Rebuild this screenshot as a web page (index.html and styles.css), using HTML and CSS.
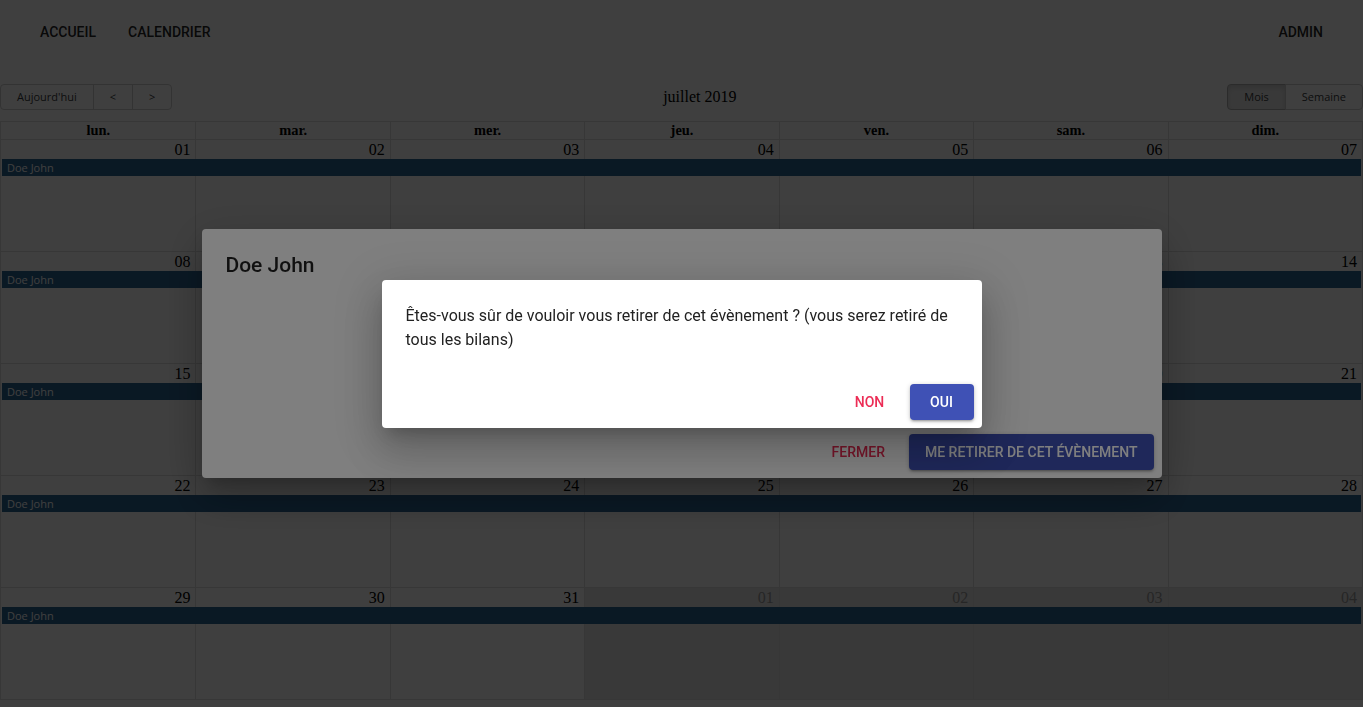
FILE: index.html
```html
<!DOCTYPE html>
<html lang="fr">
<head>
<meta charset="utf-8">
<title>Calendrier</title>
<link rel="stylesheet" href="styles.css">
</head>
<body>
<header class="appbar">
  <nav class="appbar-toolbar">
    <div class="nav-left">
      <button class="nav-btn">Accueil</button>
      <button class="nav-btn">Calendrier</button>
    </div>
    <button class="nav-btn">Admin</button>
  </nav>
</header>

<main class="calendar">
  <div class="cal-toolbar">
    <div class="btn-group">
      <button class="tb-btn">Aujourd'hui</button>
      <button class="tb-btn">&lt;</button>
      <button class="tb-btn">&gt;</button>
    </div>
    <span class="cal-label">juillet 2019</span>
    <div class="btn-group">
      <button class="tb-btn active">Mois</button>
      <button class="tb-btn">Semaine</button>
    </div>
  </div>

  <div class="month-view">
    <div class="month-header">
      <div class="hdr">lun.</div><div class="hdr">mar.</div><div class="hdr">mer.</div><div class="hdr">jeu.</div><div class="hdr">ven.</div><div class="hdr">sam.</div><div class="hdr">dim.</div>
    </div>

    <div class="week">
      <div class="week-bg"><div class="bg"></div><div class="bg"></div><div class="bg"></div><div class="bg"></div><div class="bg"></div><div class="bg"></div><div class="bg"></div></div>
      <div class="week-content">
        <div class="date">01</div><div class="date">02</div><div class="date">03</div><div class="date">04</div><div class="date">05</div><div class="date">06</div><div class="date">07</div>
        <div class="event">Doe John</div>
      </div>
    </div>

    <div class="week">
      <div class="week-bg"><div class="bg"></div><div class="bg"></div><div class="bg"></div><div class="bg"></div><div class="bg"></div><div class="bg"></div><div class="bg"></div></div>
      <div class="week-content">
        <div class="date">08</div><div class="date">09</div><div class="date">10</div><div class="date">11</div><div class="date">12</div><div class="date">13</div><div class="date">14</div>
        <div class="event">Doe John</div>
      </div>
    </div>

    <div class="week">
      <div class="week-bg"><div class="bg"></div><div class="bg"></div><div class="bg"></div><div class="bg"></div><div class="bg"></div><div class="bg"></div><div class="bg"></div></div>
      <div class="week-content">
        <div class="date">15</div><div class="date">16</div><div class="date">17</div><div class="date">18</div><div class="date">19</div><div class="date">20</div><div class="date">21</div>
        <div class="event">Doe John</div>
      </div>
    </div>

    <div class="week">
      <div class="week-bg"><div class="bg"></div><div class="bg"></div><div class="bg"></div><div class="bg"></div><div class="bg"></div><div class="bg"></div><div class="bg"></div></div>
      <div class="week-content">
        <div class="date">22</div><div class="date">23</div><div class="date">24</div><div class="date">25</div><div class="date">26</div><div class="date">27</div><div class="date">28</div>
        <div class="event">Doe John</div>
      </div>
    </div>

    <div class="week">
      <div class="week-bg"><div class="bg"></div><div class="bg"></div><div class="bg"></div><div class="bg off"></div><div class="bg off"></div><div class="bg off"></div><div class="bg off"></div></div>
      <div class="week-content">
        <div class="date">29</div><div class="date">30</div><div class="date">31</div><div class="date off">01</div><div class="date off">02</div><div class="date off">03</div><div class="date off">04</div>
        <div class="event">Doe John</div>
      </div>
    </div>
  </div>
</main>

<div class="modal">
  <div class="backdrop"></div>
  <div class="paper paper-lg">
    <h2 class="dlg-title">Doe John</h2>
    <div class="dlg-content dlg-content-empty"></div>
    <div class="dlg-actions">
      <button class="mbtn mbtn-text">Fermer</button>
      <button class="mbtn mbtn-contained">Me retirer de cet évènement</button>
    </div>
  </div>
</div>

<div class="modal">
  <div class="backdrop"></div>
  <div class="paper paper-sm">
    <div class="dlg-content dlg-content-first">
      <p class="dlg-text">Êtes-vous sûr de vouloir vous retirer de cet évènement ? (vous serez retiré de tous les bilans)</p>
    </div>
    <div class="dlg-actions">
      <button class="mbtn mbtn-text">Non</button>
      <button class="mbtn mbtn-contained">Oui</button>
    </div>
  </div>
</div>
</body>
</html>
```

FILE: styles.css
```css
* { box-sizing: border-box; }

html, body {
  margin: 0;
  padding: 0;
  background: #fff;
  font-family: "Liberation Serif", "Times New Roman", serif;
  color: #000;
  height: 100%;
  overflow: hidden;
}

/* App bar */
.appbar {
  height: 64px;
  background: #fff;
}
.appbar-toolbar {
  height: 64px;
  padding: 0 24px;
  display: flex;
  align-items: center;
  justify-content: space-between;
}
.nav-left { display: flex; }
.nav-btn {
  font-family: Roboto, "Liberation Sans", sans-serif;
  font-size: 14px;
  font-weight: 500;
  text-transform: uppercase;
  color: rgba(0,0,0,0.87);
  background: none;
  border: 0;
  padding: 8px 16px;
  line-height: 20px;
  min-height: 36px;
  margin: 0;
  cursor: pointer;
}

/* Calendar */
.calendar {
  padding-top: 20px;
}
.cal-toolbar {
  display: flex;
  align-items: center;
  margin-bottom: 11px;
}
.btn-group {
  display: flex;
}
.tb-btn {
  font-family: "Open Sans", "Liberation Sans", sans-serif;
  font-size: 11px;
  line-height: 12px;
  color: #373a3c;
  background: none;
  border: 1px solid #ccc;
  padding: 6px 16px;
  margin: 0;
  border-radius: 0;
  white-space: nowrap;
}
.tb-btn + .tb-btn { margin-left: -1px; }
.tb-btn:first-child { border-radius: 4px 0 0 4px; }
.tb-btn:last-child { border-radius: 0 4px 4px 0; }
.tb-btn.active {
  background: #e6e6e6;
  border-color: #adadad;
  box-shadow: inset 0 3px 5px rgba(0,0,0,0.125);
}
.cal-label {
  flex: 1;
  text-align: center;
  padding: 0 10px;
  font-size: 16px;
}

.month-view {
  height: 579px;
  border: 1px solid #ddd;
  display: flex;
  flex-direction: column;
}
.month-header {
  display: grid;
  grid-template-columns: repeat(7, 1fr);
}
.hdr {
  height: 18px;
  line-height: 17px;
  text-align: center;
  font-weight: bold;
  font-size: 14.4px;
  padding: 0 3px;
  border-bottom: 1px solid #ddd;
}
.hdr + .hdr { border-left: 1px solid #ddd; }

.week {
  flex: 1;
  display: grid;
  border-top: 1px solid #ddd;
}
.month-header + .week { border-top: 0; }
.week > * { grid-area: 1 / 1; }
.week-bg {
  display: grid;
  grid-template-columns: repeat(7, 1fr);
}
.bg + .bg { border-left: 1px solid #ddd; }
.bg.off { background: #e6e6e6; }
.week-content {
  display: grid;
  grid-template-columns: repeat(7, 1fr);
  align-content: start;
}
.date {
  text-align: right;
  padding-right: 5px;
  font-size: 16px;
  line-height: 19px;
}
.date.off { color: #999; }
.event {
  grid-column: 1 / -1;
  margin: 0 1px 1px 1px;
  padding: 2px 5px;
  background: #2b6492;
  color: #fff;
  font-family: "Open Sans", "Liberation Sans", sans-serif;
  font-size: 11px;
  line-height: 13px;
  white-space: nowrap;
}

/* Modals */
.modal {
  position: fixed;
  inset: 0;
  display: flex;
  align-items: center;
  justify-content: center;
}
.backdrop {
  position: absolute;
  inset: 0;
  background: rgba(0,0,0,0.5);
}
.paper {
  position: relative;
  background: #fff;
  border-radius: 4px;
  display: flex;
  flex-direction: column;
  box-shadow: 0px 11px 15px -7px rgba(0,0,0,0.2), 0px 24px 38px 3px rgba(0,0,0,0.14), 0px 9px 46px 8px rgba(0,0,0,0.12);
  font-family: Roboto, "Liberation Sans", sans-serif;
}
.paper-lg { width: 960px; }
.paper-sm { width: 600px; }

.dlg-title {
  margin: 0;
  padding: 24px 24px 20px;
  font-size: 21px;
  font-weight: 500;
  line-height: 24.5px;
  color: rgba(0,0,0,0.87);
}
.dlg-content {
  padding: 0 24px 24px;
}
.dlg-content-empty { height: 128.5px; }
.dlg-content-first { padding-top: 24px; }
.dlg-text {
  margin: 0;
  font-size: 16px;
  line-height: 24px;
  color: #222;
}
.dlg-actions {
  display: flex;
  justify-content: flex-end;
  align-items: center;
  margin: 8px 4px;
}
.mbtn {
  font-family: Roboto, "Liberation Sans", sans-serif;
  font-size: 14px;
  font-weight: 500;
  text-transform: uppercase;
  min-width: 64px;
  min-height: 36px;
  padding: 8px 16px;
  line-height: 20px;
  margin: 0 4px;
  border: 0;
  border-radius: 4px;
  background: none;
}
.mbtn-text { color: #ec2c55; }
.mbtn-contained {
  background: #3f51b5;
  color: #fff;
  box-shadow: 0px 1px 5px 0px rgba(0,0,0,0.2), 0px 2px 2px 0px rgba(0,0,0,0.14), 0px 3px 1px -2px rgba(0,0,0,0.12);
}
```
